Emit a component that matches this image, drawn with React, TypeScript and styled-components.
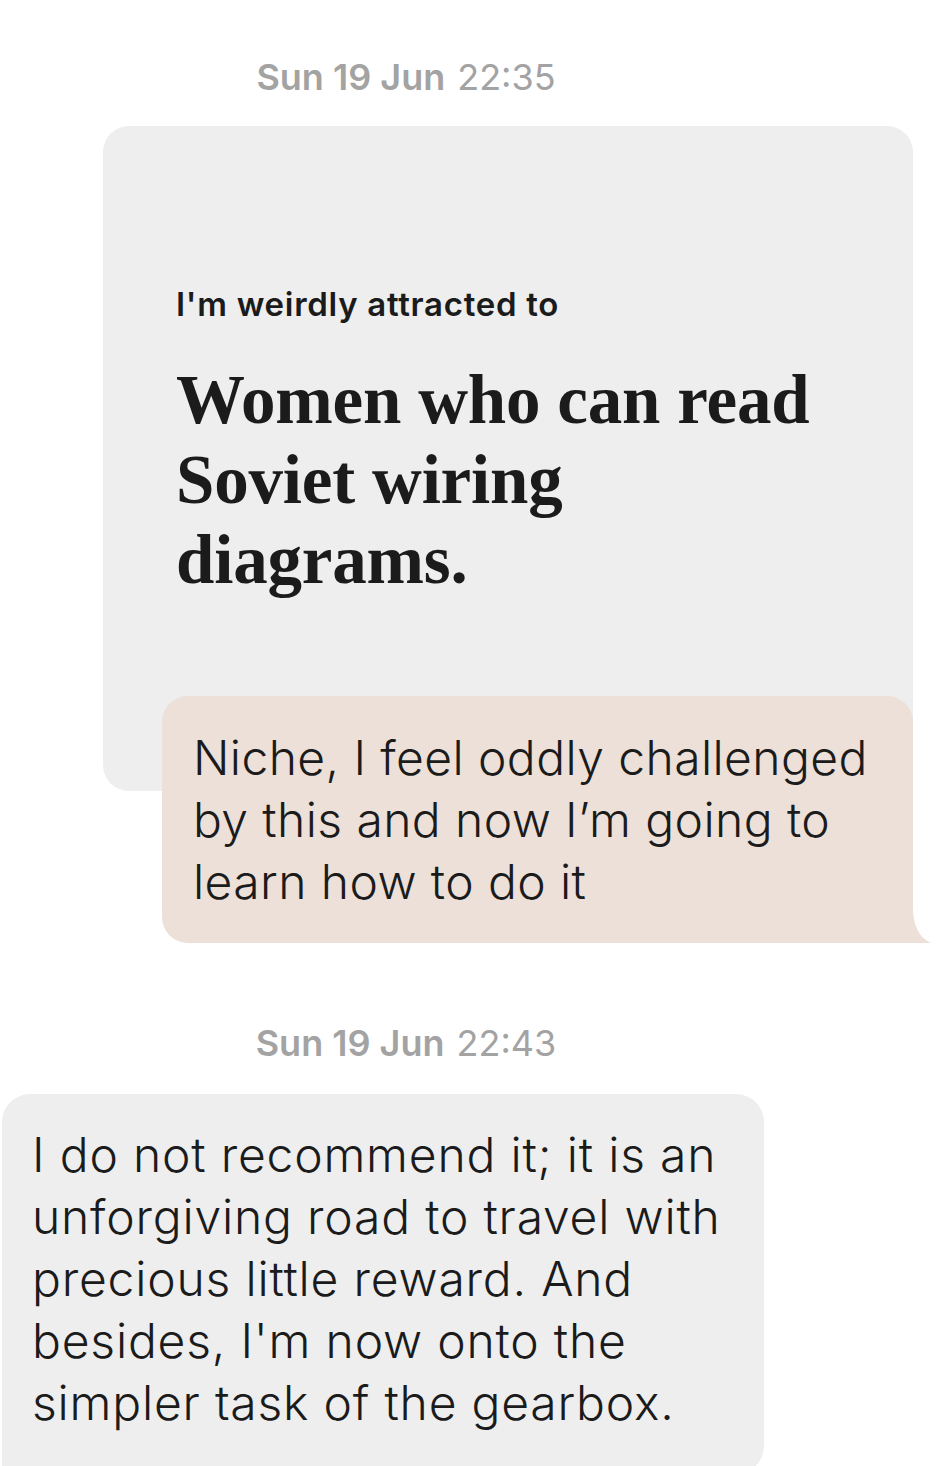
import styled, { createGlobalStyle } from "styled-components";

const GlobalStyle = createGlobalStyle`
  html, body {
    margin: 0;
    padding: 0;
    background: #ffffff;
  }
  body {
    font-family: Inter, "Noto Sans", sans-serif;
    color: #1b1b1b;
  }
`;

type Stamp = { day: string; time: string };

const App = () => {
  const first: Stamp = { day: "Sun 19 Jun", time: "22:35" };
  const second: Stamp = { day: "Sun 19 Jun", time: "22:43" };

  return (
    <>
      <GlobalStyle />
      <Page>
        <StampRow $gap={0}>
          <StampDay>{first.day}</StampDay>
          <StampTime>{first.time}</StampTime>
        </StampRow>

        <PromptCard>
          <PromptLabel>I'm weirdly attracted to</PromptLabel>
          <PromptAnswer>
            Women who can read
            <br />
            Soviet wiring
            <br />
            diagrams.
          </PromptAnswer>
        </PromptCard>

        <ReplyBubble>
          Niche, I feel oddly challenged by this and now I’m going to learn how to do it
          <Tail viewBox="0 0 20 36" preserveAspectRatio="none">
            <path d="M0 0 C0 18 6 30 20 36 L0 36 Z" fill="#ece0d8" />
          </Tail>
        </ReplyBubble>

        <StampRow $gap={80}>
          <StampDay>{second.day}</StampDay>
          <StampTime>{second.time}</StampTime>
        </StampRow>

        <IncomingBubble>
          I do not recommend it; it is an unforgiving road to travel with precious little
          reward. And besides, I'm now onto the simpler task of the gearbox.
        </IncomingBubble>
      </Page>
    </>
  );
};

export default App;

const Page = styled.div`
  width: 952px;
  height: 1466px;
  overflow: hidden;
  display: flex;
  flex-direction: column;
  padding-top: 57px;
  box-sizing: border-box;
`;

const StampRow = styled.div<{ $gap: number }>`
  display: flex;
  justify-content: center;
  gap: 12px;
  padding-right: 140px;
  margin-top: ${(p) => p.$gap}px;
  font-family: Inter, "Liberation Sans", sans-serif;
  font-size: 36px;
  line-height: 40px;
  color: #a3a3a3;
`;

const StampDay = styled.span`
  font-weight: 600;
`;

const StampTime = styled.span`
  font-weight: 400;
`;

const PromptCard = styled.div`
  margin: 29px 0 0 103px;
  width: 810px;
  box-sizing: border-box;
  padding: 158px 40px 191px 73px;
  background: #eeeeee;
  border-radius: 26px;
`;

const PromptLabel = styled.div`
  font-family: Inter, "Noto Sans", sans-serif;
  font-weight: 600;
  font-size: 33px;
  line-height: 40px;
  letter-spacing: 0.7px;
  color: #1b1b1b;
`;

const PromptAnswer = styled.div`
  margin-top: 36px;
  font-family: "Liberation Serif", "DejaVu Serif", serif;
  font-weight: 700;
  font-size: 69px;
  line-height: 80px;
  letter-spacing: -0.2px;
  color: #1b1b1b;
`;

const ReplyBubble = styled.div`
  position: relative;
  margin: -95px 0 0 162px;
  width: 751px;
  box-sizing: border-box;
  padding: 31px 30px 30px 31px;
  background: #ece0d8;
  border-radius: 26px 26px 0 26px;
  font-weight: 300;
  font-size: 48px;
  line-height: 62px;
  letter-spacing: 0.4px;
  color: #1b1b1b;
`;

const Tail = styled.svg`
  position: absolute;
  right: -18px;
  bottom: 0;
  width: 18px;
  height: 36px;
`;

const IncomingBubble = styled.div`
  margin: 31px 0 0 2px;
  width: 762px;
  box-sizing: border-box;
  padding: 30px 40px 40px 30px;
  background: #eeeeee;
  border-radius: 28px 28px 28px 0;
  font-weight: 300;
  font-size: 48px;
  line-height: 62px;
  letter-spacing: 0.8px;
  color: #1b1b1b;
`;
